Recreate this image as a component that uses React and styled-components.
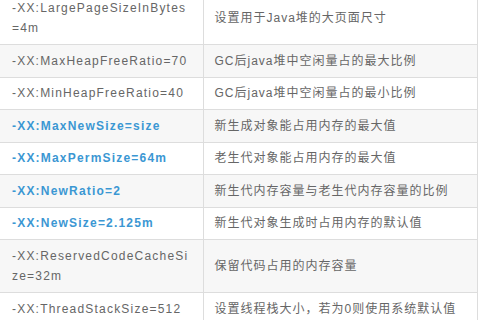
import React from "react";
import styled, { createGlobalStyle } from "styled-components";

const GlobalStyle = createGlobalStyle`
  html, body {
    margin: 0;
    padding: 0;
    background: #fff;
    overflow: hidden;
  }
  *, *::before, *::after {
    box-sizing: border-box;
  }
`;

// the screenshot is taken part way down the page, so the first row is cut
const Page = styled.div`
  width: 480px;
  height: 320px;
  overflow: hidden;
`;

const Table = styled.table`
  margin-top: -8px;
  width: 478px;
  border-collapse: collapse;
  table-layout: fixed;
  font-family: "Liberation Sans", "Noto Sans CJK SC", sans-serif;
  font-size: 12px;
  letter-spacing: 1px;
  line-height: 20.5px;
  color: #666;
`;

const Row = styled.tr`
  background: ${(p) => (p.$odd ? "#f7f7f7" : "#fff")};
  border-bottom: 1px solid #ddd;
`;

const Cell = styled.td`
  padding: 5.5px 10px 5.5px 12px;
  vertical-align: middle;
  word-break: break-all;
  border-right: 1px solid #ddd;
  width: ${(p) => p.$w || "auto"};
`;

const RightCell = styled(Cell)`
  padding-left: 11px;
`;

const Param = styled.span`
  letter-spacing: 1.2px;
  color: ${(p) => (p.$hot ? "#3b97d3" : "inherit")};
  font-weight: ${(p) => (p.$hot ? "bold" : "normal")};
`;

const rows = [
  ["-XX:LargePageSizeInBytes=4m", "设置用于Java堆的大页面尺寸"],
  ["-XX:MaxHeapFreeRatio=70", "GC后java堆中空闲量占的最大比例"],
  ["-XX:MinHeapFreeRatio=40", "GC后java堆中空闲量占的最小比例"],
  ["-XX:MaxNewSize=size", "新生成对象能占用内存的最大值", true],
  ["-XX:MaxPermSize=64m", "老生代对象能占用内存的最大值", true],
  ["-XX:NewRatio=2", "新生代内存容量与老生代内存容量的比例", true],
  ["-XX:NewSize=2.125m", "新生代对象生成时占用内存的默认值", true],
  ["-XX:ReservedCodeCacheSize=32m", "保留代码占用的内存容量"],
  ["-XX:ThreadStackSize=512", "设置线程栈大小，若为0则使用系统默认值"],
];

export default function App() {
  return (
    <Page>
      <GlobalStyle />
      <Table>
        <tbody>
          {rows.map(([flag, desc, hot], i) => (
            <Row key={flag} $odd={i % 2 === 1}>
              <Cell $w="203px">
                <Param $hot={hot}>{flag}</Param>
              </Cell>
              <RightCell>{desc}</RightCell>
            </Row>
          ))}
        </tbody>
      </Table>
    </Page>
  );
}
